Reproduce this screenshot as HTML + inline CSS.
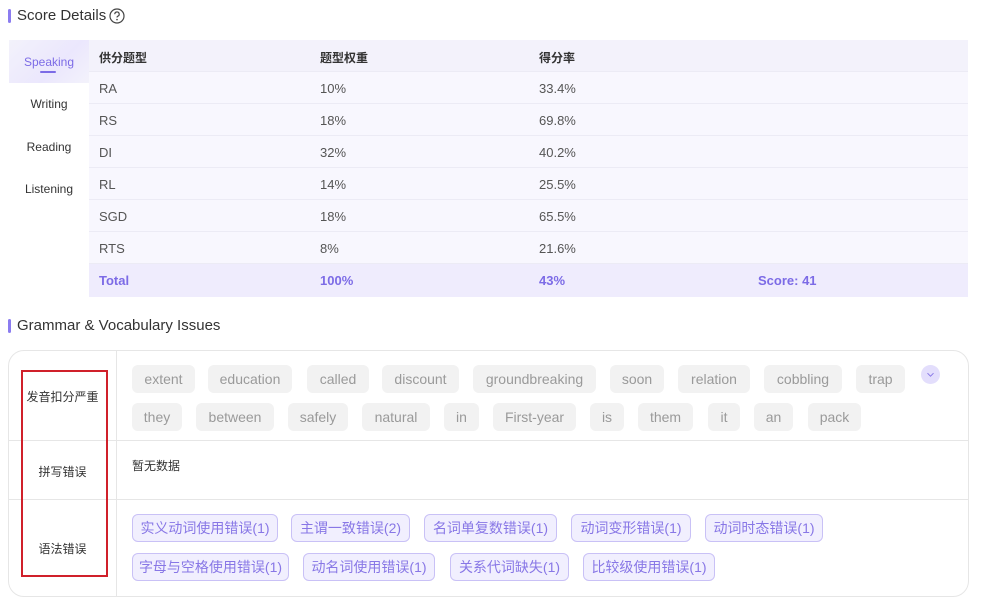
<!DOCTYPE html>
<html><head><meta charset="utf-8"><style>
*{box-sizing:border-box;margin:0;padding:0}
body{width:986px;height:608px;background:#fff;font-family:"Liberation Sans","Noto Sans CJK SC",sans-serif;position:relative;overflow:hidden;color:#333}
.a{position:absolute}
.title{font-size:15px;color:#333;display:flex;align-items:center}
.bar{width:3px;height:14px;background:#8b7cf0;border-radius:2px;margin-right:6px}
.tab{position:absolute;left:9px;width:80px;text-align:center;font-size:12px;color:#333}
.row{position:absolute;left:89px;width:879px;height:32px;background:#f8f7fe;border-bottom:1px solid #ecebf5;font-size:13px;color:#555}
.row span{position:absolute;top:9px}
.chip{position:absolute;height:28px;line-height:28px;background:#f2f2f2;color:#9a9a9a;font-size:14px;border-radius:6px;text-align:center}
.pc{position:absolute;height:28px;line-height:26px;background:#f1effe;border:1px solid #c9c1f6;color:#8877e6;font-size:14px;border-radius:6px;text-align:center}
.lab{position:absolute;left:8px;width:109px;text-align:center;font-size:12px;color:#333}
</style></head><body>
<div class="a title" style="left:8px;top:7px"><div class="bar"></div>Score Details<svg width="16" height="16" viewBox="0 0 16 16" style="margin-left:3px"><circle cx="8" cy="8" r="7" fill="none" stroke="#444" stroke-width="1.2"/><path d="M5.8 6.2a2.2 2.2 0 1 1 3 2c-.6.3-.8.7-.8 1.3" fill="none" stroke="#444" stroke-width="1.2"/><circle cx="8" cy="11.6" r=".8" fill="#444"/></svg></div>

<div class="a" style="left:9px;top:40px;width:959px;height:32px;background:#f3f2fb"></div>
<div class="a" style="left:9px;top:40px;width:80px;height:43px;background:linear-gradient(135deg,#f3f2fb,#ebe7fd 60%,#f3f2fb)"></div>
<div class="tab" style="top:55px;color:#7c6be6;font-size:12px">Speaking</div>
<div class="a" style="left:40px;top:71px;width:16px;height:2px;background:#7c6be6;border-radius:1px"></div>
<div class="tab" style="top:97px">Writing</div>
<div class="tab" style="top:140px">Reading</div>
<div class="tab" style="top:182px">Listening</div>

<div class="a" style="left:89px;top:40px;width:879px;height:32px;border-bottom:1px solid #ecebf5;font-size:12px;font-weight:bold;color:#333">
<span class="a" style="left:10px;top:9px">供分题型</span><span class="a" style="left:231px;top:9px">题型权重</span><span class="a" style="left:450px;top:9px">得分率</span></div>
<div class="row" style="top:72px"><span style="left:10px">RA</span><span style="left:231px">10%</span><span style="left:450px">33.4%</span></div>
<div class="row" style="top:104px"><span style="left:10px">RS</span><span style="left:231px">18%</span><span style="left:450px">69.8%</span></div>
<div class="row" style="top:136px"><span style="left:10px">DI</span><span style="left:231px">32%</span><span style="left:450px">40.2%</span></div>
<div class="row" style="top:168px"><span style="left:10px">RL</span><span style="left:231px">14%</span><span style="left:450px">25.5%</span></div>
<div class="row" style="top:200px"><span style="left:10px">SGD</span><span style="left:231px">18%</span><span style="left:450px">65.5%</span></div>
<div class="row" style="top:232px"><span style="left:10px">RTS</span><span style="left:231px">8%</span><span style="left:450px">21.6%</span></div>
<div class="row" style="top:264px;height:33px;background:#efecfd;color:#7c6be6;font-weight:bold;border:none"><span style="left:10px">Total</span><span style="left:231px">100%</span><span style="left:450px">43%</span><span style="left:669px">Score: 41</span></div>

<div class="a title" style="left:8px;top:317px"><div class="bar"></div>Grammar &amp; Vocabulary Issues</div>

<div class="a" style="left:8px;top:350px;width:961px;height:247px;border:1px solid #e6e6e6;border-radius:16px"></div>
<div class="a" style="left:116px;top:351px;width:1px;height:245px;background:#e6e6e6"></div>
<div class="a" style="left:9px;top:440px;width:959px;height:1px;background:#e6e6e6"></div>
<div class="a" style="left:9px;top:499px;width:959px;height:1px;background:#e6e6e6"></div>
<div class="a" style="left:21px;top:370px;width:87px;height:207px;border:2px solid #d0202a"></div>
<div class="lab" style="top:388px">发音扣分严重</div>
<div class="lab" style="top:463px">拼写错误</div>
<div class="lab" style="top:540px">语法错误</div>
<div class="a" style="left:132px;top:457px;font-size:12px;color:#333">暂无数据</div>

<div class="chip" style="left:132px;top:365px;width:63px">extent</div>
<div class="chip" style="left:208px;top:365px;width:84px">education</div>
<div class="chip" style="left:307px;top:365px;width:62px">called</div>
<div class="chip" style="left:382px;top:365px;width:77px">discount</div>
<div class="chip" style="left:473px;top:365px;width:123px">groundbreaking</div>
<div class="chip" style="left:610px;top:365px;width:54px">soon</div>
<div class="chip" style="left:678px;top:365px;width:72px">relation</div>
<div class="chip" style="left:764px;top:365px;width:78px">cobbling</div>
<div class="chip" style="left:856px;top:365px;width:49px">trap</div>
<div class="a" style="left:921px;top:365px;width:19px;height:19px;border-radius:50%;background:#e3defc"><svg width="19" height="19" viewBox="0 0 19 19"><path d="M6.5 8.2l3 3 3-3" fill="none" stroke="#8877e6" stroke-width="1"/></svg></div>

<div class="chip" style="left:132px;top:403px;width:50px">they</div>
<div class="chip" style="left:196px;top:403px;width:78px">between</div>
<div class="chip" style="left:288px;top:403px;width:60px">safely</div>
<div class="chip" style="left:362px;top:403px;width:68px">natural</div>
<div class="chip" style="left:444px;top:403px;width:35px">in</div>
<div class="chip" style="left:493px;top:403px;width:83px">First-year</div>
<div class="chip" style="left:590px;top:403px;width:34px">is</div>
<div class="chip" style="left:638px;top:403px;width:55px">them</div>
<div class="chip" style="left:708px;top:403px;width:32px">it</div>
<div class="chip" style="left:754px;top:403px;width:39px">an</div>
<div class="chip" style="left:808px;top:403px;width:53px">pack</div>

<div class="pc" style="left:132px;top:514px;width:146px">实义动词使用错误(1)</div>
<div class="pc" style="left:291px;top:514px;width:119px">主谓一致错误(2)</div>
<div class="pc" style="left:424px;top:514px;width:133px">名词单复数错误(1)</div>
<div class="pc" style="left:571px;top:514px;width:120px">动词变形错误(1)</div>
<div class="pc" style="left:705px;top:514px;width:118px">动词时态错误(1)</div>
<div class="pc" style="left:132px;top:553px;width:157px">字母与空格使用错误(1)</div>
<div class="pc" style="left:303px;top:553px;width:132px">动名词使用错误(1)</div>
<div class="pc" style="left:450px;top:553px;width:119px">关系代词缺失(1)</div>
<div class="pc" style="left:583px;top:553px;width:132px">比较级使用错误(1)</div>
</body></html>
